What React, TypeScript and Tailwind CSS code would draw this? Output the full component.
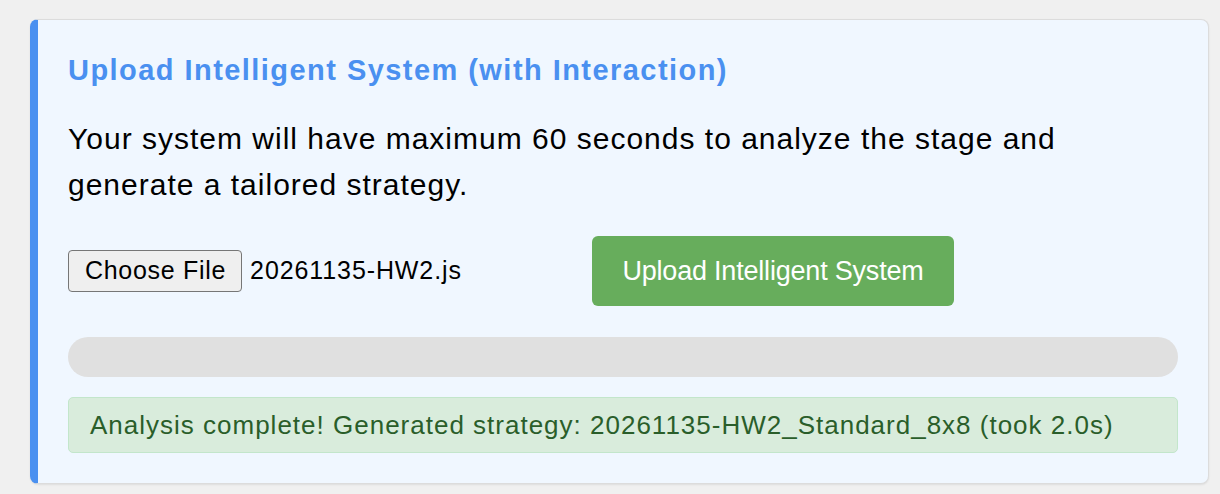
import React from 'react';

export default function App() {
  return (
    <div className="min-h-screen bg-[#f0f0f0] pl-[30px] pr-[11px] pt-[19px] font-['Liberation_Sans',Arial,sans-serif]">
      <div className="rounded-lg border border-[#dcdcdc] border-l-[8px] border-l-[#4a90f0] bg-[#f0f7ff] pl-[30px] pr-[30px] pt-[32px] pb-[30px] shadow-[0_1px_2px_rgba(0,0,0,0.08)]">
        <h3 className="text-[29px] font-bold leading-[36px] tracking-[1.45px] text-[#4a90f0]">
          Upload Intelligent System (with Interaction)
        </h3>

        <p className="mt-[28px] text-[30px] leading-[46px] tracking-[1px] text-black">
          Your system will have maximum 60 seconds to analyze the stage and generate a tailored strategy.
        </p>

        <div className="mt-[28px] flex items-center">
          <div className="flex w-[524px] items-center">
            <span className="flex h-[42px] items-center rounded-[4px] border border-[#767676] bg-[#efefef] pl-[16px] pr-[15px] text-[25px] tracking-[0.7px] text-black">
              Choose File
            </span>
            <span className="ml-[8px] text-[25px] tracking-[0.9px] text-black">20261135-HW2.js</span>
          </div>
          <button className="h-[70px] w-[362px] rounded-[6px] bg-[#67ad5c] text-[27px] tracking-[-0.2px] text-white">
            Upload Intelligent System
          </button>
        </div>

        <div className="mt-[31px] h-[40px] w-full rounded-full bg-[#e0e0e0]" />

        <div className="mt-[20px] flex h-[56px] items-center rounded-[5px] border border-[#c3e6cb] bg-[#d9ecdc] px-[21px] text-[26px] tracking-[1px] text-[#2a5e2a]">
          Analysis complete! Generated strategy: 20261135-HW2_Standard_8x8 (took 2.0s)
        </div>
      </div>
    </div>
  );
}
